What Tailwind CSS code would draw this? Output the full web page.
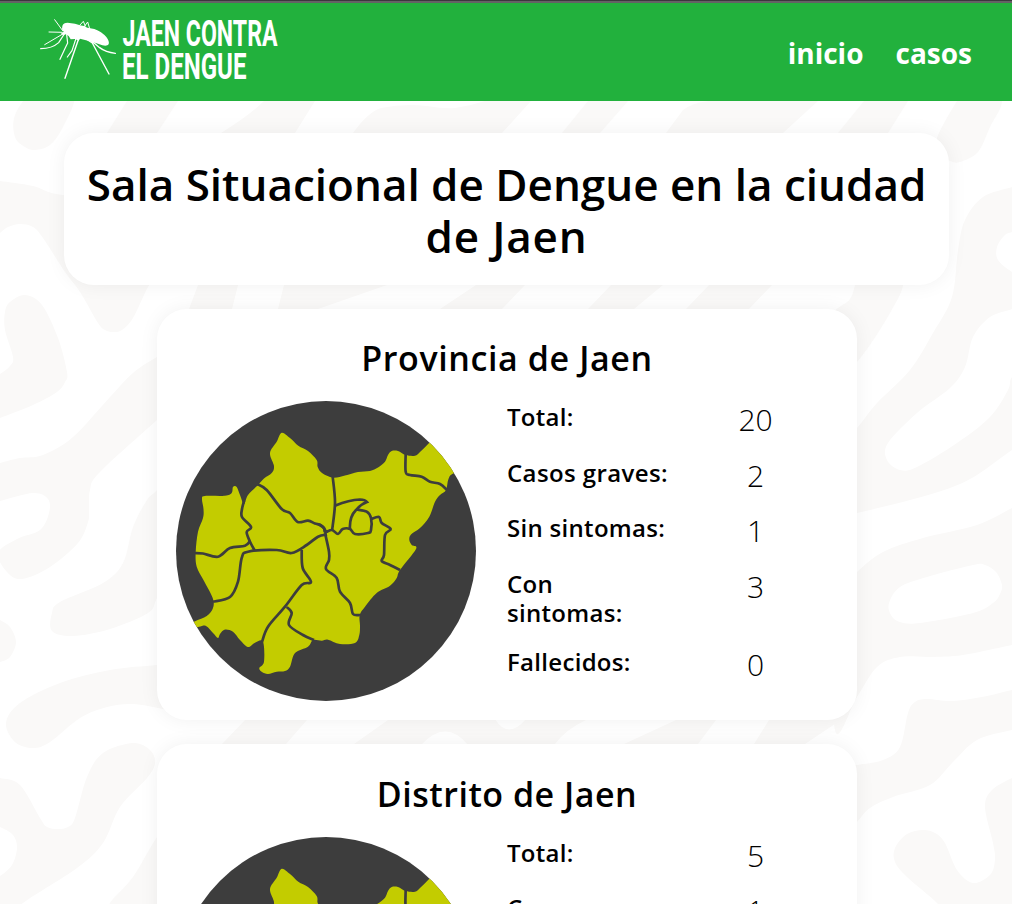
<!DOCTYPE html>
<html lang="es">
<head>
<meta charset="utf-8">
<title>Jaen contra el dengue</title>
<script src="https://cdn.jsdelivr.net/npm/@tailwindcss/browser@4"></script>
</head>
<body class="bg-white">
<div class="relative isolate h-[904px] overflow-hidden font-['Open_Sans',sans-serif] text-black">

  <!-- Decorative background -->
  <svg class="absolute inset-0 -z-10" width="1012" height="904" viewBox="0 0 1012 904" fill="#faf9f8">
    <path data-smooth="33,90 15,115 15,137 25,147 35,150 50,145 63,127 75,95 60,70"/>
    <path d="M127 101L107 133L90 180H130L157 133L178 101Z"/>
    <path data-smooth="-10,180 0,181 33,186 63,195 150,200 160,270 148,287 133,318 122,330 113,332 105,330 98,323 80,292 65,272 43,238 33,227 20,224 8,227 0,233 -10,240"/>
    <path data-smooth="-10,378 0,374 10,366 13,357 5,330 5,312 10,302 25,295 42,305 58,338 67,372 65,382 57,392 33,405 0,418 -10,422"/>
    <path data-smooth="-10,466 0,463 20,458 43,455 73,437 110,397 133,373 157,357 190,340 190,390 157,420 100,472 90,490 89,510 88,522 78,543 50,567 22,579 7,572 -2,553 17,539 40,530 49,513 48,499 33,493 0,501 -10,503"/>
    <path data-smooth="170,470 157,490 147,500 133,527 123,563 103,583 60,602 52,613 52,631 73,636 110,629 148,613 157,598 175,560"/>
    <path data-smooth="-5,618 0,620 10,627 16,642 10,657 0,662 -5,662"/>
    <path data-smooth="190,662 157,665 110,670 60,683 20,703 6,723 15,742 33,748 50,742 80,718 107,707 133,704 163,709 190,715"/>
    <path data-smooth="-10,777 0,778 20,785 40,818 47,827 58,829 68,827 75,818 87,777 103,753 133,743 150,750 155,763 147,778 120,807 103,843 77,868 23,903 0,925 -10,925"/>
    <path fill="#fff" data-smooth="-10,824 0,827 13,835 17,848 12,865 0,876 -10,880"/>
    <path data-smooth="180,810 157,837 133,877 110,903 110,915 180,915"/>

    <path d="M264 101Q250 115 221 133L210 150H280L295 133L315 101Z"/>
    <path d="M353 133Q368 112 381 108Q405 103 427 106Q445 109 455 108Q470 106 485 101H531L502 133V150H350Z"/>
    <path d="M588 101L562 133H600L628 101Z"/>
    <path d="M709 101Q692 103 683 110L666 133H783L818 101Z"/>
    <path d="M864 101L838 133V140H881L888 133L908 101Z"/>
    <path d="M198 285L189 309H232L238 285ZM284 285L278 309H318L387 285ZM476 285L440 309H502L525 285ZM611 285L588 309H634L663 285ZM709 285L686 309H749L772 285Z"/>
    <path d="M245 720L222 744H286L307 720ZM388 720L354 744H555Q565 730 586 720ZM676 720L624 744H698L716 720ZM769 720L754 744H805L841 720V700H790Z"/>
    <path fill="#fff" d="M495 719Q508 740 526 719ZM421 745Q446 718 468 745Z"/>

    <path data-smooth="957,101 937,138 940,155 950,161 960,162 978,152 990,127 1002,101 990,80 970,85"/>
    <path data-smooth="903,280 890,313 857,362 830,380 830,320 850,299 858,280 880,260"/>
    <path data-smooth="1025,182 1012,187 983,197 965,220 958,250 952,297 933,333 910,370 877,403 857,428 830,455 830,518 857,513 910,500 950,488 977,475 1012,450 1030,440 1030,360 1012,377 1008,390 990,417 957,443 917,467 900,470 887,460 888,443 917,413 950,388 965,367 973,337 990,317 1012,309 1030,300 1030,282 1012,272 998,260 997,247 1005,235 1012,232 1030,225"/>
    <path data-smooth="835,595 857,572 883,552 923,538 977,525 1012,508 1030,500 1030,642 1012,645 963,655 930,657 900,657 877,667 857,697 835,730"/>
    <path fill="#fff" data-smooth="889,603 900,587 927,577 973,565 985,565 996,572 1002,585 1000,594 993,603 973,613 920,623 900,622 891,615"/>
    <path data-smooth="840,768 857,765 883,760 900,747 908,713 915,702 927,699 953,701 987,696 1012,690 1030,688 1030,728 1012,730 977,740 953,762 930,785 893,797 870,808 857,822 840,840"/>
    <path data-smooth="1030,770 1012,778 992,790 985,807 993,843 995,860 990,875 973,883 957,870 945,843 935,833 923,830 907,834 895,848 895,862 907,877 937,903 950,920 1030,920"/>
  </svg>

  <!-- Header -->
  <header class="flex h-[101px] items-center justify-between border-t-[3px] border-[#646265] bg-[#22b13d] pr-10 pl-[37px]">
    <svg width="245" height="70" viewBox="37 14 245 70" class="-mt-1.5" fill="#fff" aria-label="Jaen contra el dengue">
      <g transform="scale(.33333)">
        <path d="M187 78Q190 68 203 68L225 71L240 76Q252 77 262 83L283 87Q305 95 319 111Q329 124 326 133Q322 139 307 136L285 128L264 122L240 116L236 122L225 117L212 118L206 108L198 103L190 105L182 102L191 95L186 88Z"/>
        <g fill="none" stroke="#fff" stroke-width="3" stroke-linecap="round" stroke-linejoin="round">
          <path d="M188 92L164 59M187 97L147 96M190 101L134 134"/>
          <path stroke-width="3.6" d="M193 102L176 128Q156 146 122 146M200 104L203 129L196 143L180 178"/>
          <path stroke-width="3.6" d="M228 115L216 152L202 171"/>
          <path stroke-width="4.2" d="M237 113L223 154L195 235M262 119L277 129L327 222M276 124L299 143Q317 157 346 160"/>
          <path d="M239 76L250 64L256 78M253 80L263 66L269 86"/>
        </g>
      </g>
      <g class="font-['Roboto',sans-serif] text-[37px] font-bold">
        <text x="122.500" y="45.700" textLength="155" lengthAdjust="spacingAndGlyphs">JAEN CONTRA</text>
        <text x="122" y="78.500" textLength="124.500" lengthAdjust="spacingAndGlyphs">EL DENGUE</text>
      </g>
    </svg>
    <nav class="flex gap-8 pt-0.5 text-[28px] font-bold text-white">
      <a>inicio</a>
      <a>casos</a>
    </nav>
  </header>
  <div class="absolute inset-x-0 top-0 h-px bg-[#3b383d]"></div>

  <main class="flex flex-col items-center gap-6 pt-8">
    <h1 class="ml-px w-[885px] rounded-[30px] bg-white pt-[25px] pb-[23px] text-center text-[44px] leading-[52px] font-semibold whitespace-nowrap shadow-[0_0_20px_rgba(0,0,0,0.06)]">Sala Situacional de Dengue en la ciudad<br><span class="tracking-[0.8px]">de Jaen</span></h1>

    <section class="ml-0.5 h-[411px] w-[700px] shrink-0 rounded-[30px] bg-white px-5 pt-7 shadow-[0_0_20px_rgba(0,0,0,0.06)]">
      <h2 class="text-center text-[34px] leading-[42px] font-semibold tracking-[0.6px]">Provincia de Jaen</h2>
      <div class="mt-[22px] flex">
        <svg class="-ml-px size-[300px] rounded-full" viewBox="176 401 300 300">
          <g id="mapa">
            <rect x="176" y="401" width="300" height="300" fill="#3d3d3d"/>
            <path fill="#c3cc00" data-smooth="281.7,432.7 290,438 298.3,445.7 308,451 316.700,460 317.7,467 322,473 333,477.7 345,475.5 358,472 370,471 378,467.500 385,461.7 388,455 391.7,451 398,451 405.7,455 415,455.7 420,452 429.3,442.7 445,425 475,465 453.7,473.3 448.5,479 446,490 440,495 435,501.7 429.3,516.7 420,528 411,534.5 409.3,540 411.7,545 416,549 400,570 396.7,578 390,585.7 376.7,593 365,606.7 359.7,615 360,626 359.3,635 355,643 340,644 328,639.7 321.7,640.7 313,640 308,646.7 295,653 290,666.700 285,671 276.7,671.7 268,674 262,672 259.300,668 264,661.7 263,641.7 255,642.7 248,647 240,640 233,631.700 225,629.500 220,634 218,638 213,633 206,626 198,627 175,632 194,621.7 206.7,616 213,608 212.7,598 204,581 196.7,566.7 195.700,551.7 198,531.7 203,518 203.500,509 202,499 205,496 225,495.7 231.7,493 233,487 236.7,487 240,495 244,504 248,495 258,485 264,478.500 271.7,473 274,466 270,453 276.7,441.7"/>
            <g fill="none" stroke="#3d3d3d" stroke-width="2.7">
              <path data-line="244,501 242,509 242,517 251,527 246.700,532 250,541.7 255,551"/>
              <path data-line="257,484 266.7,490 281.7,509 290,513 297.7,522 308,520.700 315,523.500 321.7,525.700 327,533"/>
              <path data-line="195,553 203,553.500 218,556.700 230,548 245,545.700 250,541"/>
              <path data-line="213,601.700 230,597 238,581.7 241.700,558 248,551.7 276.7,550 291.700,553 306.7,545 318,536.7 327,534.500"/>
              <path data-line="301.7,550 302.7,568 311,582 301.7,585 285,606.7 268,626.7 262,642"/>
              <path data-line="286.7,607 291.7,613 289,625 303,635 314,640"/>
              <path data-line="325,533 329,551.7 329,560 326,569 336.7,578 340,591.7 350,603 353,614 360,615"/>
              <path data-line="332.700,477 335,503 332,531"/>
              <path data-line="318,524 324,528 325,532 332,530 338,534 342.7,529 350,529 355,534 368,533 371,530 371,518 366.7,511.7 357,509.500"/>
              <path d="M335.500 505.500Q349 500 360 499.500Q365 499.500 367 502Q361 504 356 510Q349 517 350 530"/>
              <path data-line="371,519 379,517 381.7,523 390.7,529 385,535 384,555 381.7,561 390,565 400,570"/>
              <path data-line="405.7,453 405.7,471.7 410,475 421.7,476.7 430,481.7 440,484 447,490"/>
            </g>
          </g>
        </svg>
        <dl class="ml-8 grid w-[320px] auto-rows-max grid-cols-[175px_1fr] gap-y-[20.500px] pt-px">
          <dt class="-ml-px text-2xl leading-[29px] font-semibold tracking-[0.3px]">Total:</dt><dd class="text-center text-[30px] leading-[35px] font-light">20</dd>
          <dt class="-ml-px text-2xl leading-[29px] font-semibold tracking-[0.4px]">Casos graves:</dt><dd class="text-center text-[30px] leading-[35px] font-light">2</dd>
          <dt class="-ml-px text-2xl leading-[29px] font-semibold tracking-[0.3px]">Sin sintomas:</dt><dd class="text-center text-[30px] leading-[35px] font-light">1</dd>
          <dt class="-ml-px text-2xl leading-[29px] font-semibold tracking-[0.3px]">Con<br>sintomas:</dt><dd class="text-center text-[30px] leading-[35px] font-light">3</dd>
          <dt class="-ml-px text-2xl leading-[29px] font-semibold tracking-[0.3px]">Fallecidos:</dt><dd class="text-center text-[30px] leading-[35px] font-light">0</dd>
        </dl>
      </div>
    </section>

    <section class="ml-0.5 h-[411px] w-[700px] shrink-0 rounded-[30px] bg-white px-5 pt-[29px] shadow-[0_0_20px_rgba(0,0,0,0.06)]">
      <h2 class="text-center text-[34px] leading-[42px] font-semibold tracking-[0.5px]">Distrito de Jaen</h2>
      <div class="mt-[22px] flex">
        <svg class="-ml-px size-[300px] rounded-full" viewBox="176 401 300 300"><use href="#mapa"/></svg>
        <dl class="ml-8 grid w-[320px] auto-rows-max grid-cols-[175px_1fr] gap-y-[20px] pt-px">
          <dt class="-ml-px text-2xl leading-[29px] font-semibold tracking-[0.3px]">Total:</dt><dd class="text-center text-[30px] leading-[35px] font-light">5</dd>
          <dt class="-ml-px text-2xl leading-[29px] font-semibold tracking-[0.4px]">Casos graves:</dt><dd class="text-center text-[30px] leading-[35px] font-light">1</dd>
        </dl>
      </div>
    </section>
  </main>
</div>
<script>
  // Turns a list of points into a smooth Catmull-Rom curve, closed or open.
  function curve(list, closed) {
    const p = list.trim().split(/\s+/).map(s => s.split(',').map(Number));
    const n = p.length;
    const at = i => closed ? p[(i + n) % n] : p[Math.max(0, Math.min(n - 1, i))];
    let d = 'M' + p[0];
    for (let i = 0; i < (closed ? n : n - 1); i++) {
      const a = at(i - 1), b = at(i), c = at(i + 1), e = at(i + 2);
      d += 'C' + [b[0] + (c[0] - a[0]) / 6, b[1] + (c[1] - a[1]) / 6,
                  c[0] - (e[0] - b[0]) / 6, c[1] - (e[1] - b[1]) / 6, c[0], c[1]].join(' ');
    }
    return d + (closed ? 'Z' : '');
  }
  document.querySelectorAll('[data-smooth]').forEach(el => el.setAttribute('d', curve(el.dataset.smooth, true)));
  document.querySelectorAll('[data-line]').forEach(el => el.setAttribute('d', curve(el.dataset.line, false)));
</script>
</body>
</html>
